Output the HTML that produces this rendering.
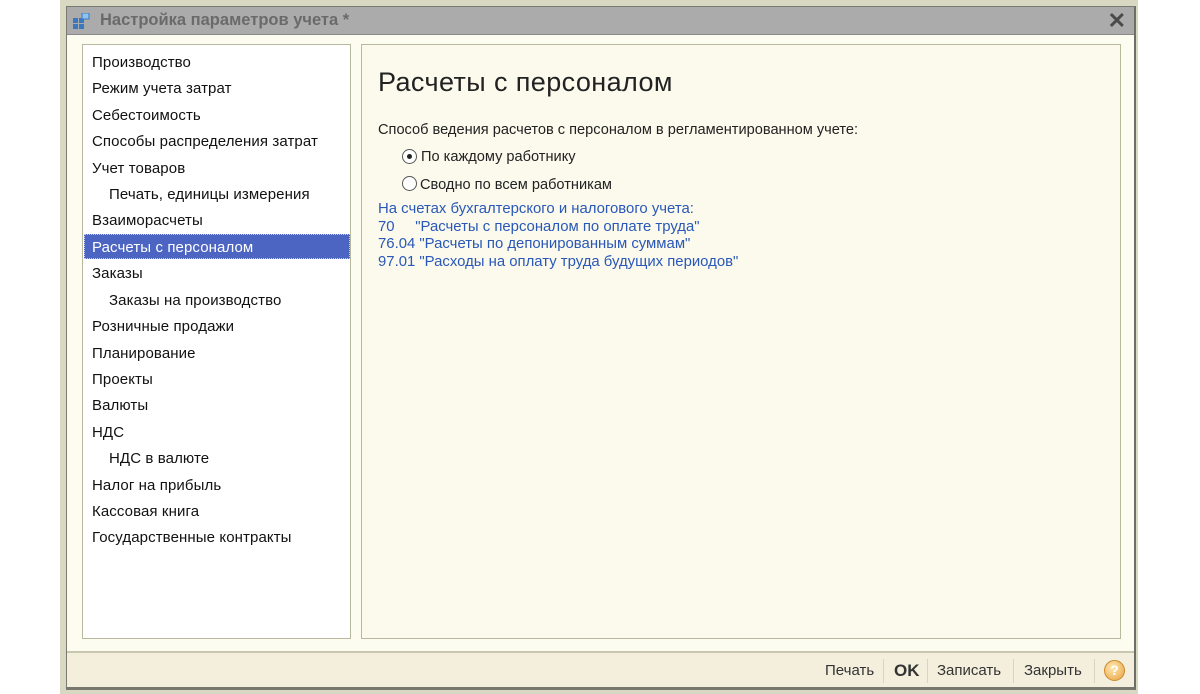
<!DOCTYPE html>
<html><head><meta charset="utf-8"><style>
*{margin:0;padding:0;box-sizing:border-box}
body{width:1200px;height:694px;background:#fff;position:relative;overflow:hidden;font-family:"Liberation Sans",Arial,sans-serif}
.frame{position:absolute;left:60px;top:0;width:1078px;height:694px;background:#d9d9c3}
.win{position:absolute;left:66px;top:6px;width:1070px;height:684px;background:#fdfcf0;border:1px solid #7a7a72;border-right:2px solid #6e6e68;border-bottom:3px solid #77776f}
.title{position:absolute;left:0;top:0;right:0;height:28px;background:#ababab;border-bottom:1px solid #8a8a8a}
.title .t{position:absolute;left:33px;top:4px;font-size:16.5px;font-weight:bold;color:#6a6a6a}
.title .x{position:absolute;right:8px;top:1px;font-size:22px;color:#4a4a4a;font-weight:bold}
.left{position:absolute;left:15px;top:37px;width:269px;height:595px;background:#fff;border:1px solid #b8b89c}
.right{position:absolute;left:294px;top:37px;width:760px;height:595px;background:#fbfaed;border:1px solid #b8b89c}
.item{position:absolute;left:9px;font-size:15px;color:#111;height:25px;line-height:25px;letter-spacing:.1px;margin-top:1px}
.sel{position:absolute;left:1px;top:189px;width:266px;height:25px;background:#4c64c2;border:1px dotted #c8cfee}
.foot{position:absolute;left:0;right:0;bottom:0;height:36px;background:#f3efdc;border-top:2px solid #c9c6b0}
.fb{position:absolute;top:9px;font-size:15px;color:#333}
.sep{position:absolute;top:6px;width:1px;height:24px;background:#d8d4bf}
h1{position:absolute;left:16px;top:22px;font-size:27px;font-weight:normal;color:#222;letter-spacing:.4px}
.p{position:absolute;font-size:14.6px;color:#222}
.b{position:absolute;left:16px;font-size:14.9px;color:#2a58b8}
.r{position:absolute;width:15px;height:15px;border:1px solid #555;border-radius:50%;background:#fff}
</style></head><body>
<div class="frame"></div>
<div class="win">
 <div class="title">
  <svg style="position:absolute;left:6px;top:6px" width="18" height="17"><rect x="0" y="5" width="5" height="5" fill="#3a78c0"/><rect x="6" y="5" width="5" height="5" fill="#3a78c0"/><rect x="0" y="11" width="5" height="5" fill="#3a78c0"/><rect x="6" y="11" width="5" height="5" fill="#3a78c0"/><rect x="9" y="0" width="7" height="6" fill="#8ec3ee" stroke="#3a78c0"/></svg>
  <div class="t">Настройка параметров учета *</div>
  <div class="x">✕</div>
 </div>
 <div class="left">
  <div class="sel"></div>
  <div class="item" style="top:4px">Производство</div>
  <div class="item" style="top:30px">Режим учета затрат</div>
  <div class="item" style="top:57px">Себестоимость</div>
  <div class="item" style="top:83px">Способы распределения затрат</div>
  <div class="item" style="top:110px">Учет товаров</div>
  <div class="item" style="top:136px;left:26px">Печать, единицы измерения</div>
  <div class="item" style="top:162px">Взаиморасчеты</div>
  <div class="item" style="top:189px;color:#fff">Расчеты с персоналом</div>
  <div class="item" style="top:215px">Заказы</div>
  <div class="item" style="top:242px;left:26px">Заказы на производство</div>
  <div class="item" style="top:268px">Розничные продажи</div>
  <div class="item" style="top:295px">Планирование</div>
  <div class="item" style="top:321px">Проекты</div>
  <div class="item" style="top:347px">Валюты</div>
  <div class="item" style="top:374px">НДС</div>
  <div class="item" style="top:400px;left:26px">НДС в валюте</div>
  <div class="item" style="top:427px">Налог на прибыль</div>
  <div class="item" style="top:453px">Кассовая книга</div>
  <div class="item" style="top:479px">Государственные контракты</div>
 </div>
 <div class="right">
  <h1>Расчеты с персоналом</h1>
  <div class="p" style="left:16px;top:77px">Способ ведения расчетов с персоналом в регламентированном учете:</div>
  <div class="r" style="left:40px;top:104px"><div style="position:absolute;left:4px;top:4px;width:5px;height:5px;border-radius:50%;background:#222"></div></div>
  <div class="p" style="left:59px;top:104px">По каждому работнику</div>
  <div class="r" style="left:40px;top:131px"></div>
  <div class="p" style="left:58px;top:132px">Сводно по всем работникам</div>
  <div class="b" style="top:156px">На счетах бухгалтерского и налогового учета:</div>
  <div class="b" style="top:173.5px">70&nbsp;&nbsp;&nbsp;&nbsp;&nbsp;"Расчеты с персоналом по оплате труда"</div>
  <div class="b" style="top:191px">76.04 "Расчеты по депонированным суммам"</div>
  <div class="b" style="top:208.5px">97.01 "Расходы на оплату труда будущих периодов"</div>
 </div>
 <div class="foot">
  <div class="fb" style="left:758px">Печать</div>
  <div class="sep" style="left:816px"></div>
  <div class="fb" style="left:827px;font-weight:bold;font-size:17px;top:8px">OK</div>
  <div class="sep" style="left:860px"></div>
  <div class="fb" style="left:870px">Записать</div>
  <div class="sep" style="left:946px"></div>
  <div class="fb" style="left:957px">Закрыть</div>
  <div class="sep" style="left:1027px"></div>
  <div style="position:absolute;left:1037px;top:7px;width:21px;height:21px;border-radius:50%;background:radial-gradient(circle at 40% 35%,#ffe9b0,#e8a040);border:1px solid #c98a30;color:#fff;font-weight:bold;font-size:14px;text-align:center;line-height:19px">?</div>
 </div>
</div>
</body></html>
